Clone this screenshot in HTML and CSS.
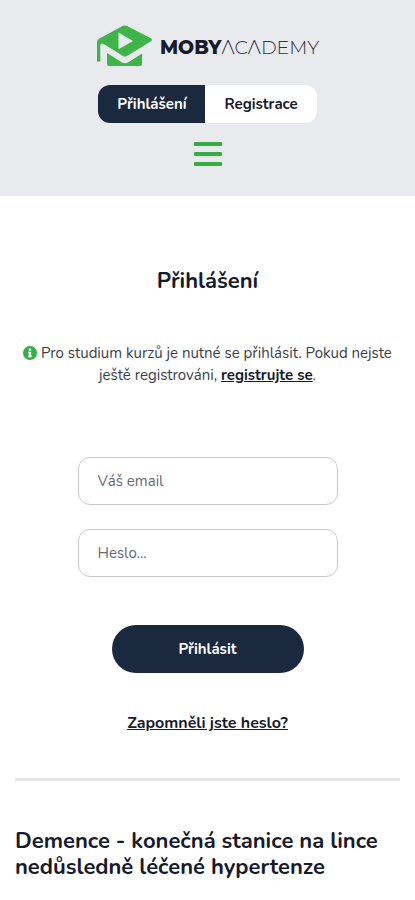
FILE: index.html
```html
<!DOCTYPE html>
<html lang="cs">
<head>
<meta charset="utf-8">
<meta name="viewport" content="width=device-width, initial-scale=1">
<title>Přihlášení</title>
<link rel="stylesheet" href="styles.css">
</head>
<body>
<header class="header">
  <a class="logo" href="#" aria-label="MobyAcademy">
    <svg class="logo-mark" viewBox="0 0 56 42" aria-hidden="true">
      <path d="M27 .8Q29 0 31 .9L54.500 13Q57.500 14.700 54.500 16.500L31 31Q29 32.200 27 31L9.500 20Q4.500 17 4.300 20V36.500H1V17Q1 15 3 13.800Z"/>
      <path d="M11 28L26 37.500Q29 39 32 37.500L46 28.500V39Q46 41 44 41H13Q11 41 11 39Z"/>
      <path class="logo-play" d="M22.500 7.500V24.300L37 15.900Z"/>
    </svg>
    <span class="wordmark"><b>MOBY</b><span class="thin">ΛCΛDEMY</span></span>
  </a>
  <nav class="switch" aria-label="Účet">
    <a class="switch-item active" href="#">Přihlášení</a>
    <a class="switch-item" href="#">Registrace</a>
  </nav>
  <button class="menu" type="button" aria-label="Menu">
    <span class="bar"></span><span class="bar"></span><span class="bar"></span>
  </button>
</header>
<main class="main">
  <h1 class="title">Přihlášení</h1>
  <p class="notice">
    <svg class="info" viewBox="0 0 14 14" aria-hidden="true">
      <circle cx="7" cy="7" r="7"/>
      <path d="M5.800 2.500H8.200V4.700H5.800ZM5 5.800H8.200V9.800H9V11.300H5V9.800H5.800V7.200H5Z"/>
    </svg>
    Pro studium kurzů je nutné se přihlásit. Pokud nejste ještě registrováni, <a href="#">registrujte se</a>.
  </p>
  <form class="form">
    <input class="field" type="email" aria-label="Váš email" placeholder="Váš email">
    <input class="field" type="password" aria-label="Heslo" placeholder="Heslo...">
    <button class="submit" type="submit">Přihlásit</button>
    <a class="forgot" href="#">Zapomněli jste heslo?</a>
  </form>
  <hr class="rule">
  <h2 class="article">Demence - konečná stanice na lince nedůsledně léčené hypertenze</h2>
</main>
</body>
</html>
```
FILE: styles.css
```css
* { box-sizing: border-box; }

body {
  margin: 0;
  background: #fff;
  color: #151a2c;
  font-family: Nunito, "Open Sans", sans-serif;
  font-size: 15px;
  line-height: 22px;
}

a { color: inherit; }

.header {
  display: flex;
  flex-direction: column;
  align-items: center;
  padding: 25px 16px 30px;
  background: #e8eaed;
}

.logo {
  display: flex;
  align-items: center;
  gap: 8px;
  text-decoration: none;
}

.logo-mark {
  width: 56px;
  height: 42px;
  fill: #3fb549;
}

.logo-mark .logo-play { fill: #e8eaed; }

.wordmark {
  padding-top: 4px;
  font-family: Montserrat, Inter, sans-serif;
  font-size: 19px;
  line-height: 24px;
}

.wordmark b { font-weight: 800; }

.thin {
  color: #30343e;
  font-weight: 300;
}

.switch {
  display: flex;
  margin-top: 18px;
  border-radius: 12px;
  background: #fff;
  overflow: hidden;
}

.switch-item {
  padding: 8px 19px;
  font-weight: 700;
  text-decoration: none;
}

.switch-item.active {
  background: #1b293f;
  color: #fff;
}

.menu {
  display: flex;
  flex-direction: column;
  justify-content: space-between;
  width: 28px;
  height: 24px;
  margin-top: 19px;
  padding: 0;
  border: 0;
  background: none;
}

.bar {
  width: 100%;
  height: 4px;
  border-radius: 1px;
  background: #35ad40;
}

.main {
  padding: 70px 15px 20px;
}

.title {
  margin: 0;
  font-size: 22px;
  line-height: 30px;
  text-align: center;
}

.notice {
  margin: 46px 0 71px;
  color: #3a3e4a;
  text-align: center;
}

.notice a {
  color: #151a2c;
  font-weight: 700;
}

.info {
  width: 14px;
  height: 14px;
  vertical-align: -2px;
  fill: #2fb344;
}

.info path { fill: #fff; }

.form {
  display: flex;
  flex-direction: column;
  align-items: center;
  gap: 24px;
}

.field {
  width: 100%;
  max-width: 260px;
  height: 48px;
  padding: 0 19px;
  border: 1px solid #c8cacc;
  border-radius: 12px;
  background: #fff;
  color: inherit;
  font: inherit;
}

.field::placeholder {
  color: #666a70;
  opacity: 1;
}

.submit {
  width: 192px;
  height: 48px;
  margin-top: 24px;
  border: 0;
  border-radius: 24px;
  background: #1b293f;
  color: #fff;
  font: inherit;
  font-weight: 700;
}

.forgot {
  margin-top: 15px;
  font-size: 16px;
  font-weight: 700;
}

.rule {
  height: 3px;
  margin: 44px 0 47px;
  border: 0;
  background: #e5e5e5;
}

.article {
  margin: 0;
  font-size: 22px;
  line-height: 26px;
}
```
